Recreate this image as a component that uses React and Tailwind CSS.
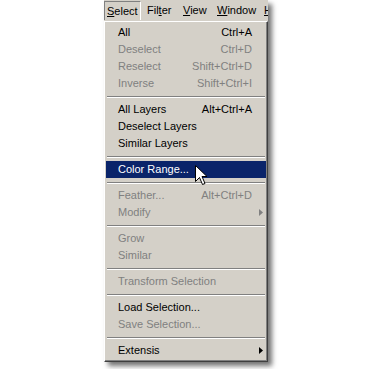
import React from "react";

const rows = [
  { t: "All", s: "Ctrl+A" },
  { t: "Deselect", s: "Ctrl+D", d: true },
  { t: "Reselect", s: "Shift+Ctrl+D", d: true },
  { t: "Inverse", s: "Shift+Ctrl+I", d: true },
  "sep",
  { t: "All Layers", s: "Alt+Ctrl+A" },
  { t: "Deselect Layers" },
  { t: "Similar Layers" },
  "sep",
  { t: "Color Range...", h: true },
  "sep",
  { t: "Feather...", s: "Alt+Ctrl+D", d: true },
  { t: "Modify", a: true, d: true },
  "sep",
  { t: "Grow", d: true },
  { t: "Similar", d: true },
  "sep",
  { t: "Transform Selection", d: true },
  "sep",
  { t: "Load Selection..." },
  { t: "Save Selection...", d: true },
  "sep",
  { t: "Extensis", a: true },
];

function Arrow({ color }) {
  return (
    <svg width="4" height="7" viewBox="0 0 4 7" className="block">
      <path d="M0 0 L4 3.5 L0 7 Z" fill={color} />
    </svg>
  );
}

export default function App() {
  return (
    <div className="w-[390px] h-[369px] bg-white relative" style={{ fontFamily: '"Liberation Sans", Arial, sans-serif' }}>
      <div className="absolute left-[104px] top-0 w-[164px] shadow-[4px_4px_5px_rgba(0,0,0,0.55)] bg-[#d4d0c8]">
        <div className="h-[21px] flex items-center text-[11px] text-black bg-[#d4d0c8] overflow-hidden">
          <div className="w-[37px] h-[19px] shrink-0 flex items-center pl-[2px] border-l border-t border-b-0 border-r border-l-[#808080] border-t-[#808080] border-r-white">
            <span><u>S</u>elect</span>
          </div>
          <div className="w-[40px] shrink-0 pl-[6px]"><span>Fil<u>t</u>er</span></div>
          <div className="w-[35px] shrink-0 pl-[2px]"><span><u>V</u>iew</span></div>
          <div className="w-[48px] shrink-0 pl-[1px]"><span><u>W</u>indow</span></div>
          <div className="shrink-0"><span><u>H</u></span></div>
        </div>
        <div className="border-t border-l border-t-white border-l-white border-r border-b border-r-[#404040] border-b-[#404040]">
          <div className="border-r border-b border-r-[#808080] border-b-[#808080] pt-[2px] pb-[1px] pl-[1px]">
            {rows.map((r, i) =>
              r === "sep" ? (
                <div key={i} className="h-[9px] flex flex-col justify-center px-[1px]">
                  <div className="h-px bg-[#808080]" />
                  <div className="h-px bg-white" />
                </div>
              ) : (
                <div
                  key={i}
                  className={
                    "h-[17px] flex items-center text-[11px] pl-[12px] " +
                    (r.a ? "pr-[3px] " : "pr-[14px] ") +
                    (r.h ? "bg-[#0a246a] text-white" : r.d ? "text-[#808080]" : "text-black")
                  }
                >
                  <span className="flex-1 whitespace-nowrap">{r.t}</span>
                  {r.s && <span className="whitespace-nowrap">{r.s}</span>}
                  {r.a && <Arrow color={r.d ? "#808080" : "#000"} />}
                </div>
              )
            )}
          </div>
        </div>
      </div>
      <svg className="absolute left-[195px] top-[165px]" width="13" height="21" viewBox="0 0 13 21">
        <path d="M0.5 0.5 L0.5 16.5 L4.5 12.5 L7.5 19.5 L10 18.5 L7 11.5 L12 11.5 Z" fill="white" stroke="black" strokeWidth="1" />
      </svg>
    </div>
  );
}
